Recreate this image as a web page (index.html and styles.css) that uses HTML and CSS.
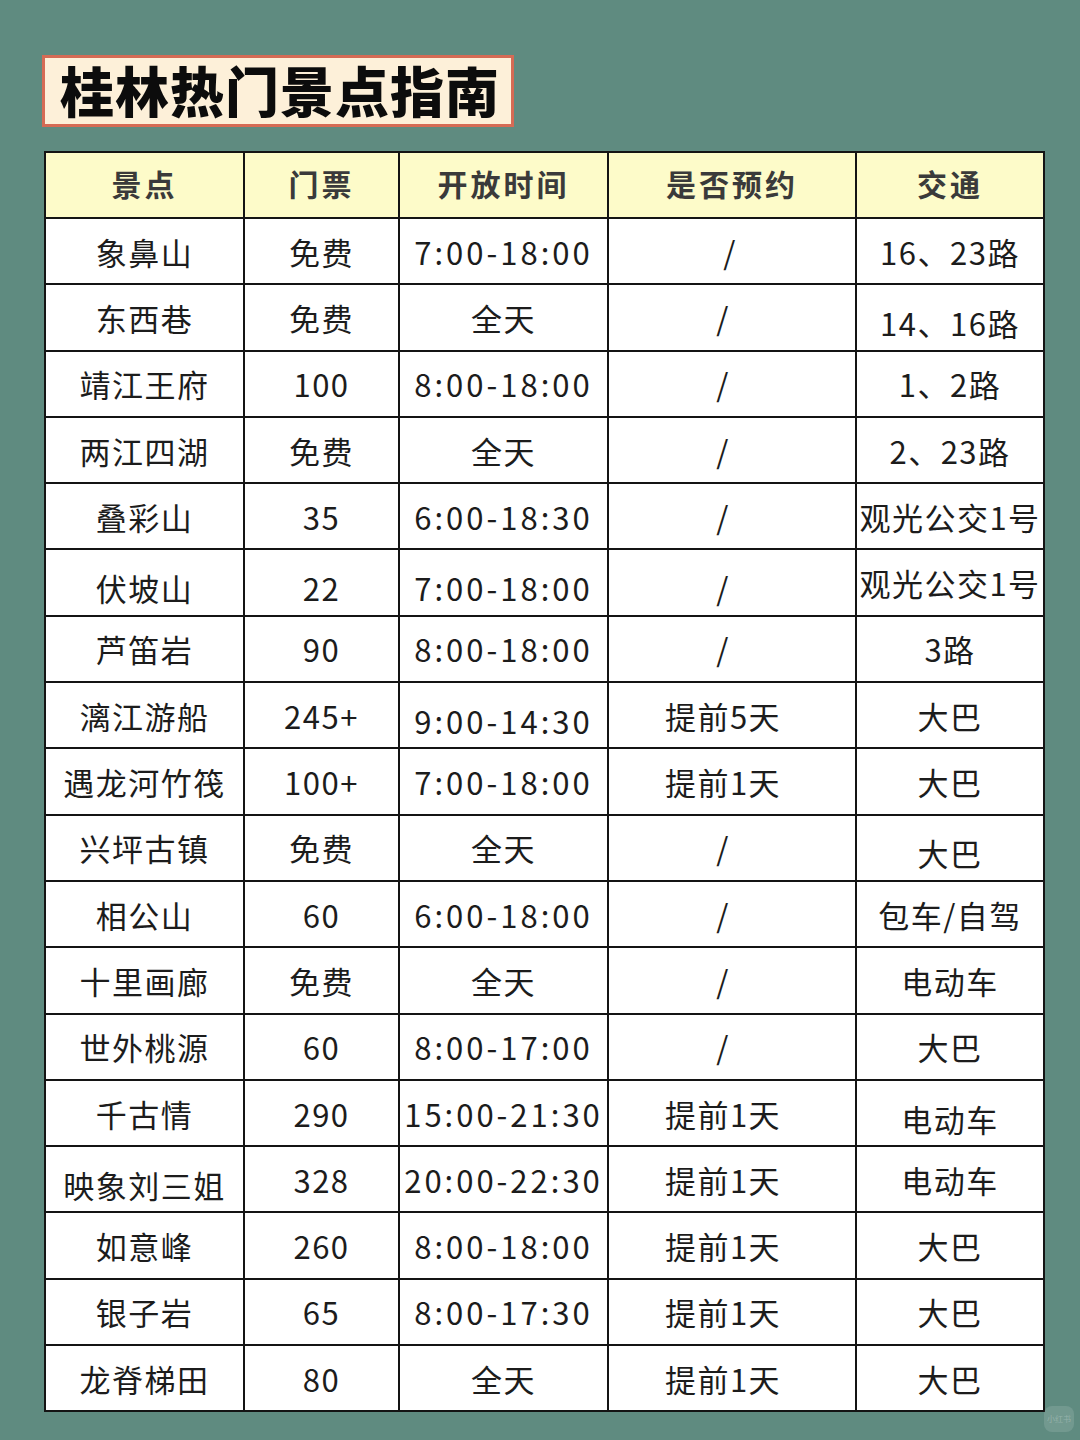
FILE: index.html
```html
<!DOCTYPE html>
<html lang="zh">
<head>
<meta charset="utf-8">
<title>桂林热门景点指南</title>
<link rel="stylesheet" href="styles.css">
</head>
<body>
<div class="page">
  <div class="title-box"><h1 class="title">桂林热门景点指南</h1></div>
  <table class="guide">
    <colgroup>
      <col class="c1"><col class="c2"><col class="c3"><col class="c4"><col class="c5">
    </colgroup>
    <thead>
      <tr><th>景点</th><th>门票</th><th>开放时间</th><th>是否预约</th><th>交通</th></tr>
    </thead>
    <tbody>
      <tr><td>象鼻山</td><td>免费</td><td class="time">7:00-18:00</td><td class="book first">/</td><td>16、23路</td></tr>
      <tr><td>东西巷</td><td>免费</td><td>全天</td><td class="book">/</td><td class="low">14、16路</td></tr>
      <tr><td>靖江王府</td><td>100</td><td class="time">8:00-18:00</td><td class="book">/</td><td>1、2路</td></tr>
      <tr><td>两江四湖</td><td>免费</td><td>全天</td><td class="book">/</td><td>2、23路</td></tr>
      <tr><td>叠彩山</td><td>35</td><td class="time">6:00-18:30</td><td class="book">/</td><td class="tight">观光公交1号</td></tr>
      <tr><td class="low">伏坡山</td><td class="low">22</td><td class="time low">7:00-18:00</td><td class="book low">/</td><td class="tight">观光公交1号</td></tr>
      <tr><td>芦笛岩</td><td>90</td><td class="time">8:00-18:00</td><td class="book">/</td><td>3路</td></tr>
      <tr><td>漓江游船</td><td>245+</td><td class="time low">9:00-14:30</td><td class="book">提前5天</td><td>大巴</td></tr>
      <tr><td>遇龙河竹筏</td><td>100+</td><td class="time">7:00-18:00</td><td class="book">提前1天</td><td>大巴</td></tr>
      <tr><td>兴坪古镇</td><td>免费</td><td>全天</td><td class="book">/</td><td class="low">大巴</td></tr>
      <tr><td>相公山</td><td>60</td><td class="time">6:00-18:00</td><td class="book">/</td><td>包车/自驾</td></tr>
      <tr><td>十里画廊</td><td>免费</td><td>全天</td><td class="book">/</td><td>电动车</td></tr>
      <tr><td>世外桃源</td><td>60</td><td class="time">8:00-17:00</td><td class="book">/</td><td>大巴</td></tr>
      <tr><td>千古情</td><td>290</td><td class="time">15:00-21:30</td><td class="book">提前1天</td><td class="low">电动车</td></tr>
      <tr><td class="low">映象刘三姐</td><td>328</td><td class="time">20:00-22:30</td><td class="book">提前1天</td><td>电动车</td></tr>
      <tr><td>如意峰</td><td>260</td><td class="time">8:00-18:00</td><td class="book">提前1天</td><td>大巴</td></tr>
      <tr><td>银子岩</td><td>65</td><td class="time">8:00-17:30</td><td class="book">提前1天</td><td>大巴</td></tr>
      <tr><td>龙脊梯田</td><td>80</td><td>全天</td><td class="book">提前1天</td><td>大巴</td></tr>
    </tbody>
  </table>
  <div class="watermark">小红书</div>
</div>
</body>
</html>
```

FILE: styles.css
```css
html, body {
  margin: 0;
  padding: 0;
}
body {
  background: #5f8b80;
  font-family: "Noto Sans CJK SC", "Noto Sans", sans-serif;
  color: #1a1a1a;
}
.page {
  position: relative;
  width: 1080px;
  height: 1440px;
  padding: 55px 0 0 42px;
  box-sizing: border-box;
}
.title-box {
  display: inline-block;
  box-sizing: border-box;
  width: 472px;
  height: 72px;
  background: #fdf0d9;
  border: 3px solid #d56b55;
}
.title {
  margin: 0;
  font-size: 54px;
  line-height: 64px;
  font-weight: 900;
  color: #0c0c0c;
  padding-left: 15px;
  letter-spacing: 1px;
}
.guide {
  margin: 24px 0 0 2px;
  width: 999px;
  table-layout: fixed;
  border-collapse: collapse;
  background: #ffffff;
}
.c1 { width: 199px; }
.c2 { width: 155px; }
.c3 { width: 209px; }
.c4 { width: 248px; }
.c5 { width: 188px; }
.guide th, .guide td {
  border: 2.5px solid #141414;
  text-align: center;
  padding: 0;
  white-space: nowrap;
  overflow: hidden;
}
.guide th {
  height: 59px;
  padding-bottom: 5px;
  background: #fdfbc9;
  font-size: 30px;
  font-weight: 700;
  color: #3a3a3a;
  letter-spacing: 3px;
}
.guide td {
  height: 64.3px;
  font-size: 31px;
  font-weight: 400;
  color: #1c1c1c;
  letter-spacing: 1.5px;
}
.guide td.time {
  letter-spacing: 3px;
}
.guide td.tight {
  letter-spacing: 1.5px;
}
.guide td.book {
  padding-right: 18px;
}
.guide td.book.first {
  padding-right: 4px;
}
.guide td.low {
  height: 54.3px;
  padding-top: 10px;
}
.watermark {
  position: absolute;
  right: 6px;
  bottom: 8px;
  width: 30px;
  height: 26px;
  border-radius: 8px;
  background: rgba(255, 255, 255, 0.12);
  color: rgba(255, 255, 255, 0.25);
  font-size: 8px;
  line-height: 26px;
  text-align: center;
}
```
